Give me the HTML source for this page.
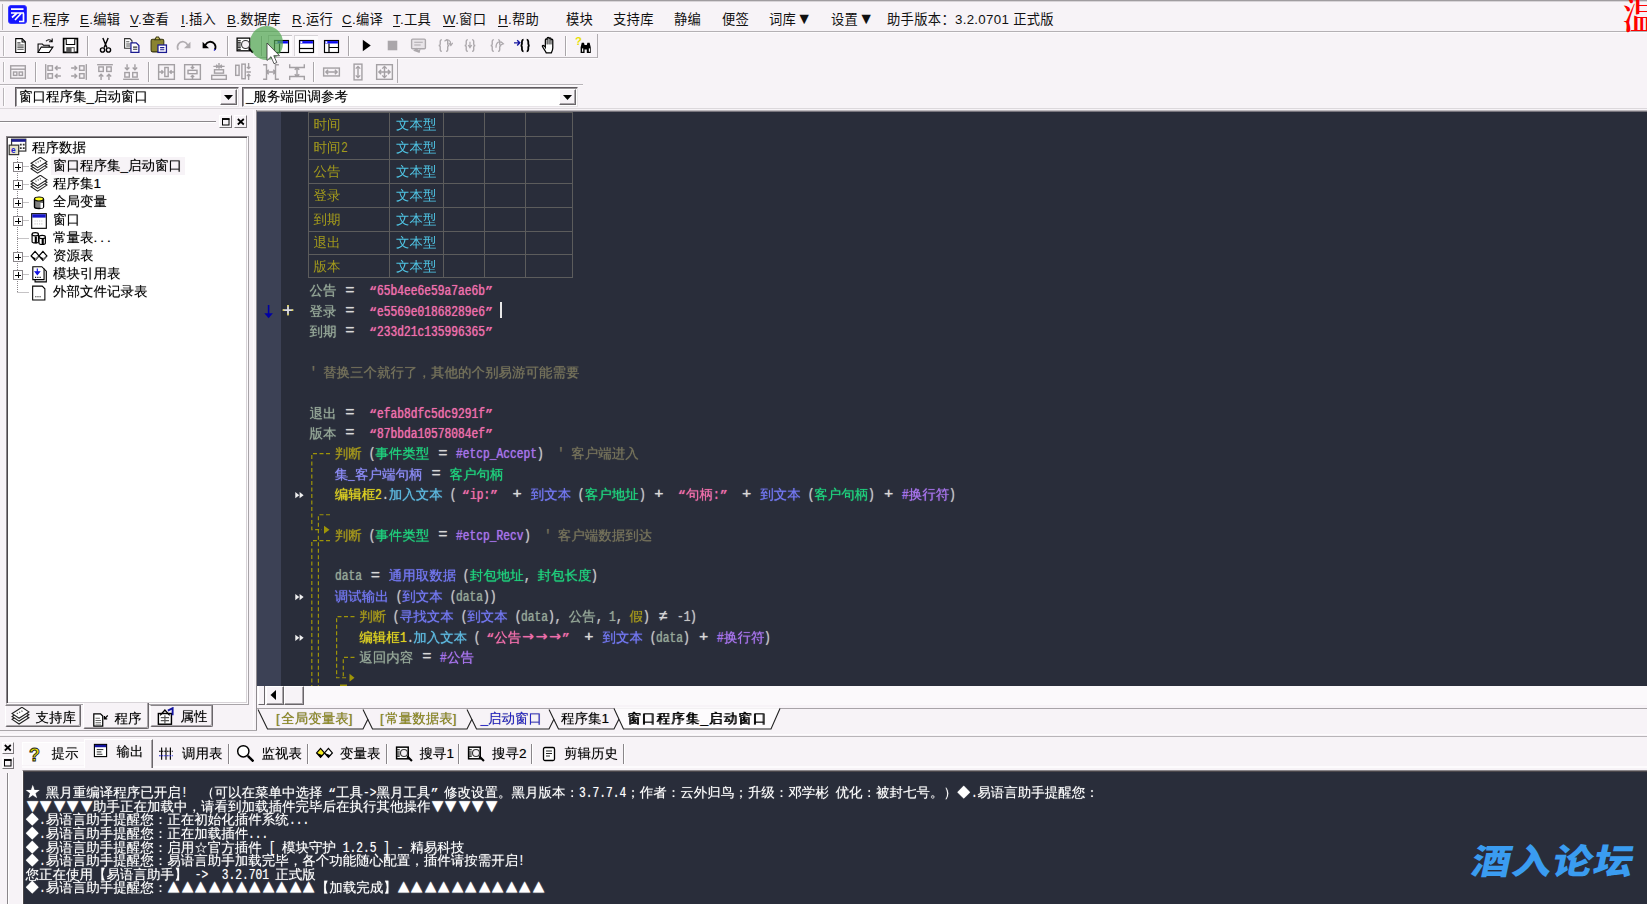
<!DOCTYPE html>
<html lang="zh-CN"><head><meta charset="utf-8"><title>易语言</title>
<style>
*{margin:0;padding:0;box-sizing:border-box}
html,body{width:1647px;height:904px;overflow:hidden;background:#f7f3f7}
body{position:relative;font-family:"Liberation Sans","WenQuanYi Zen Hei",sans-serif;font-size:13.5px;color:#000}
body div,body svg{position:absolute}
.u{white-space:pre;font-family:"Liberation Sans","WenQuanYi Zen Hei",sans-serif;font-size:13.5px;color:#000;text-shadow:0 0 .8px rgba(0,0,0,.45)}
.m{white-space:pre;font-family:"Liberation Sans","Noto Sans CJK SC",sans-serif;font-size:13.3px;letter-spacing:.3px;color:#111}
.m u{text-decoration:underline;text-underline-offset:2px}
.c{white-space:pre;font-family:"Liberation Mono","WenQuanYi Zen Hei",monospace;font-size:13.5px;color:#c8c8c8}
.c span{text-shadow:0 0 1px currentColor}
.c i,.o i{font-style:normal;font-family:"Liberation Mono",monospace;font-size:14.5px;display:inline-block;transform:scaleX(.7759);transform-origin:0 50%;position:relative;top:0;line-height:10px}
.c b{font-weight:normal;display:inline-block;width:13.5px;position:relative;line-height:10px}
.o{white-space:pre;font-family:"Liberation Mono","WenQuanYi Zen Hei",monospace;font-size:13.5px;color:#fff;text-shadow:0 0 1px rgba(255,255,255,.55)}
.o b{font-weight:normal;display:inline-block;width:13.5px;line-height:10px}
</style></head>
<body>
<div style="left:0px;top:0px;width:1647px;height:1px;background:#a09ca0"></div>
<div style="left:0px;top:1px;width:1647px;height:1px;background:#d8d4d8"></div>
<div style="left:0px;top:31.4px;width:1647px;height:1px;background:#b4b0b4"></div>
<div style="left:0px;top:32.4px;width:1647px;height:1px;background:#fdfbfd"></div>
<div style="left:2px;top:4px;width:1px;height:26px;background:#b8b4b8"></div>
<svg style="left:8px;top:5px" width="19" height="19" viewBox="0 0 19 19"><rect x="0.5" y="0.5" width="18" height="18" rx="2.5" fill="#1414ff" stroke="#3c3cff"/><path d="M3 4.2h12.5M3 8h13M4 12.5l5-4.5M7 15l6-6.5M11 16.5h4.5v-8" stroke="#fff" stroke-width="1.7" fill="none"/></svg>
<div class="m" style="left:32px;top:10.3px;height:20px;line-height:20px;"><u>F</u>.程序</div>
<div class="m" style="left:80px;top:10.3px;height:20px;line-height:20px;"><u>E</u>.编辑</div>
<div class="m" style="left:130px;top:10.3px;height:20px;line-height:20px;"><u>V</u>.查看</div>
<div class="m" style="left:181px;top:10.3px;height:20px;line-height:20px;"><u>I</u>.插入</div>
<div class="m" style="left:227px;top:10.3px;height:20px;line-height:20px;"><u>B</u>.数据库</div>
<div class="m" style="left:292px;top:10.3px;height:20px;line-height:20px;"><u>R</u>.运行</div>
<div class="m" style="left:342px;top:10.3px;height:20px;line-height:20px;"><u>C</u>.编译</div>
<div class="m" style="left:393px;top:10.3px;height:20px;line-height:20px;"><u>T</u>.工具</div>
<div class="m" style="left:443px;top:10.3px;height:20px;line-height:20px;"><u>W</u>.窗口</div>
<div class="m" style="left:498px;top:10.3px;height:20px;line-height:20px;"><u>H</u>.帮助</div>
<div class="m" style="left:566px;top:10.3px;height:20px;line-height:20px;">模块</div>
<div class="m" style="left:613px;top:10.3px;height:20px;line-height:20px;">支持库</div>
<div class="m" style="left:674px;top:10.3px;height:20px;line-height:20px;">静编</div>
<div class="m" style="left:722px;top:10.3px;height:20px;line-height:20px;">便签</div>
<div class="m" style="left:769px;top:10.3px;height:20px;line-height:20px;">词库<span style="font-size:16px;line-height:10px;letter-spacing:0">▼</span></div>
<div class="m" style="left:831px;top:10.3px;height:20px;line-height:20px;">设置<span style="font-size:16px;line-height:10px;letter-spacing:0">▼</span></div>
<div class="m" style="left:887px;top:10.3px;height:20px;line-height:20px;">助手版本：3.2.0701 正式版</div>
<div style="left:1622.700px;top:-5.500px;font-family:'Liberation Serif','Noto Serif CJK SC',serif;font-weight:600;font-size:37px;line-height:44px;color:#f00;white-space:pre">温</div>
<div style="left:0px;top:57.3px;width:598px;height:1px;background:#b8b4b8"></div>
<div style="left:0px;top:58.3px;width:598px;height:1px;background:#fdfbfd"></div>
<div style="left:597px;top:34px;width:1px;height:24px;background:#b0acb0"></div>
<div style="left:3px;top:36px;width:1px;height:20px;background:#b8b4b8"></div>
<div style="left:4px;top:36px;width:1px;height:20px;background:#fff"></div>
<svg style="left:12.0px;top:36.5px" width="17" height="17" viewBox="0 0 16 16" ><path d="M3.5 1.5h6l3 3v10h-9z" fill="#fff" stroke="#000"/><path d="M9.5 1.5v3.2h3" fill="none" stroke="#000"/><path d="M5 5.5h3M5 7.5h6M5 9.5h6M5 11.5h6" stroke="#444"/></svg>
<svg style="left:35.5px;top:36.5px" width="19" height="17" viewBox="0 0 17 16" ><path d="M1.5 14.5v-8h4l1 1.2h5.5v2" fill="none" stroke="#000"/><path d="M1.5 14.5l3-5h11l-3.5 5z" fill="#fff" stroke="#000"/><path d="M9 4c1.5-2 4-2 5.5 0M14.8 1.5v3h-3" fill="none" stroke="#000"/></svg>
<svg style="left:61.5px;top:36.5px" width="17" height="17" viewBox="0 0 16 16" ><path d="M1.5 1.5h13v13h-13z" fill="#fff" stroke="#000" stroke-width="1.6"/><path d="M4 2v5h8V2" fill="#fff" stroke="#000"/><rect x="4" y="9.5" width="8" height="5" fill="#555"/><rect x="9" y="10.5" width="2" height="3.5" fill="#fff"/></svg>
<div style="left:87px;top:36px;width:1px;height:20px;background:#aaa6aa"></div>
<div style="left:88px;top:36px;width:1px;height:20px;background:#fff"></div>
<svg style="left:97.0px;top:36.5px" width="17" height="17" viewBox="0 0 16 16" ><path d="M5.5 1l3.8 9M10.5 1L6.7 10" stroke="#000" stroke-width="1.3" fill="none"/><circle cx="5.2" cy="12.2" r="2" fill="none" stroke="#000" stroke-width="1.3"/><circle cx="10.8" cy="12.2" r="2" fill="none" stroke="#000" stroke-width="1.3"/></svg>
<svg style="left:122.5px;top:36.0px" width="18" height="18" viewBox="0 0 17 17" ><path d="M1.5 2.5h5l2 2v7h-7z" fill="#fff" stroke="#333"/><path d="M3 5.5h3M3 7.5h4M3 9.5h4" stroke="#555"/><path d="M7.5 6.5h5l2.5 2.5v6.5h-7.500z" fill="#fff" stroke="#1a1a90" stroke-width="1.2"/><path d="M9.500 10.500h4M9.500 12.500h4" stroke="#333"/></svg>
<svg style="left:148.5px;top:36.0px" width="19" height="18" viewBox="0 0 17 17" ><rect x="1.500" y="3" width="12" height="12" rx="1.5" fill="#8a8430" stroke="#3a3810"/><path d="M5 3.500l1.500-2.500h2l1.500 2.500z" fill="#c8c060" stroke="#3a3810"/><rect x="8" y="8.500" width="8" height="7" fill="#fff" stroke="#1a1a90" stroke-width="1.2"/><path d="M10 11h4M10 13h4" stroke="#1a1a90"/></svg>
<svg style="left:175.0px;top:36.5px" width="17" height="17" viewBox="0 0 16 16" ><path d="M3 12c-2-4 1-8 5-7.500 2 .3 3 1.500 4 3" fill="none" stroke="#b0acb0" stroke-width="1.600"/><path d="M14.500 4.500v6h-6z" fill="#b0acb0"/></svg>
<svg style="left:201.0px;top:36.5px" width="17" height="17" viewBox="0 0 16 16" ><path d="M13 12c2-4-1-8-5-7.500-2 .3-3 1.500-4 3" fill="none" stroke="#000" stroke-width="1.700"/><path d="M1.500 4.500v6h6z" fill="#000"/><path d="M12.300 12.800l1-1.500" stroke="#22c" stroke-width="1.200"/></svg>
<div style="left:227px;top:36px;width:1px;height:20px;background:#aaa6aa"></div>
<div style="left:228px;top:36px;width:1px;height:20px;background:#fff"></div>
<svg style="left:234.5px;top:36.0px" width="19" height="18" viewBox="0 0 17 17" ><rect x="1.500" y="2" width="12" height="12" fill="#fff" stroke="#000" stroke-width="1.200"/><path d="M2 4.500h3M2 6.500h3M2 8.500h3M2 10.500h3M2 12.500h3" stroke="#000"/><circle cx="9.500" cy="8" r="3.800" fill="#f4f0f4" stroke="#333"/><path d="M12.500 11.500l4 4" stroke="#000" stroke-width="2"/></svg>
<div style="left:261px;top:36px;width:1px;height:20px;background:#aaa6aa"></div>
<div style="left:262px;top:36px;width:1px;height:20px;background:#fff"></div>
<div style="left:268px;top:35px;width:24px;height:21px;background:#fdfbfd;border-left:1px solid #c8c4c8;border-top:1px solid #c8c4c8"></div>
<div style="left:294px;top:35px;width:24px;height:21px;background:#fdfbfd;border-left:1px solid #d8d4d8;border-top:1px solid #d8d4d8"></div>
<svg style="left:272.5px;top:38.5px" width="17" height="16" viewBox="0 0 16 16" ><rect x="1" y="1.500" width="14" height="12" fill="#fff" stroke="#000" stroke-width="1.150"/><rect x="1.600" y="2.100" width="12.800" height="2.400" fill="#0808f0"/><rect x="2" y="2.300" width="1.800" height="1.800" fill="#fff"/><path d="M6 4.500v9" stroke="#000" stroke-width="1.200"/><rect x="2" y="2.300" width="1.800" height="1.800" fill="#ddd"/></svg>
<svg style="left:298.0px;top:38.5px" width="17" height="16" viewBox="0 0 16 16" ><rect x="1" y="1.500" width="14" height="12" fill="#fff" stroke="#000" stroke-width="1.150"/><rect x="1.600" y="2.100" width="12.800" height="2.400" fill="#0808f0"/><rect x="2" y="2.300" width="1.800" height="1.800" fill="#fff"/><path d="M1 9.500h14" stroke="#000" stroke-width="1.200"/></svg>
<svg style="left:323.0px;top:38.5px" width="17" height="16" viewBox="0 0 16 16" ><rect x="1" y="1.500" width="14" height="12" fill="#fff" stroke="#000" stroke-width="1.150"/><rect x="1.600" y="2.100" width="12.800" height="2.400" fill="#0808f0"/><rect x="2" y="2.300" width="1.800" height="1.800" fill="#fff"/><path d="M5.500 4.500v9M5.500 8.500h9.500" stroke="#000" stroke-width="1.200"/></svg>
<div style="left:348px;top:36px;width:1px;height:20px;background:#aaa6aa"></div>
<div style="left:349px;top:36px;width:1px;height:20px;background:#fff"></div>
<svg style="left:358.0px;top:36.5px" width="17" height="17" viewBox="0 0 16 16" ><path d="M4.500 2.500v11l7.500-5.500z" fill="#000"/></svg>
<svg style="left:383.5px;top:36.5px" width="17" height="17" viewBox="0 0 16 16" ><rect x="3.500" y="3.500" width="9" height="9" fill="#aaa6aa"/></svg>
<svg style="left:409.5px;top:36.5px" width="17" height="17" viewBox="0 0 16 16" ><rect x="1.500" y="2" width="13" height="9" rx="1" fill="#e8e4e8" stroke="#aca8ac" stroke-width="1.300"/><path d="M4 5h8M4 7.500h6" stroke="#aca8ac"/><path d="M3 13l3-3 2 2.500 2-1.500-1 4z" fill="#aca8ac"/></svg>
<svg style="left:435.5px;top:36.5px" width="17" height="17" viewBox="0 0 16 16" ><path d="M5.500 2.500c-2 0-1.500 2.500-1.500 4 0 1-1 1.500-1.500 1.500 .5 0 1.500 .5 1.500 1.500 0 1.500-.5 4 1.500 4M9.500 2.500c2 0 1.500 2.500 1.500 4 0 1 1 1.500 1.500 1.500-.5 0-1.500 .5-1.500 1.500 0 1.500 .5 4-1.500 4" fill="none" stroke="#aca8ac" stroke-width="1.300"/><path d="M8 4c3-2.500 6-1 6 3M12 5.500l2 2.500 1.800-2.500" fill="none" stroke="#aca8ac" stroke-width="1.100"/></svg>
<svg style="left:461.5px;top:36.5px" width="17" height="17" viewBox="0 0 16 16" ><path d="M5.500 2.500c-2 0-1.500 2.500-1.500 4 0 1-1 1.500-1.500 1.500 .5 0 1.500 .5 1.500 1.500 0 1.500-.5 4 1.500 4M9.500 2.500c2 0 1.500 2.500 1.500 4 0 1 1 1.500 1.500 1.500-.5 0-1.500 .5-1.500 1.500 0 1.500 .5 4-1.500 4" fill="none" stroke="#aca8ac" stroke-width="1.300"/><path d="M7.500 4.500v5M5.800 7.500l1.700 2.500 1.700-2.500" fill="none" stroke="#aca8ac" stroke-width="1.100"/></svg>
<svg style="left:487.5px;top:36.5px" width="17" height="17" viewBox="0 0 16 16" ><path d="M5.500 2.500c-2 0-1.500 2.500-1.500 4 0 1-1 1.500-1.500 1.500 .5 0 1.500 .5 1.500 1.500 0 1.500-.5 4 1.500 4M9.500 2.500c2 0 1.500 2.500 1.500 4 0 1 1 1.500 1.500 1.500-.5 0-1.500 .5-1.500 1.500 0 1.500 .5 4-1.500 4" fill="none" stroke="#aca8ac" stroke-width="1.300"/><path d="M7.500 10c0-5 3-7 6.500-4M12.200 4.500l2.300 2-2.800 1" fill="none" stroke="#aca8ac" stroke-width="1.100"/></svg>
<svg style="left:513.5px;top:36.5px" width="18" height="17" viewBox="0 0 17 16" ><path d="M9 2.500c-1.800 0-1.500 2.500-1.500 4 0 1-.8 1.500-1.300 1.500 .5 0 1.300 .5 1.300 1.500 0 1.500-.3 4 1.500 4M12 2.500c1.800 0 1.500 2.500 1.500 4 0 1 .8 1.500 1.300 1.500-.5 0-1.300 .5-1.300 1.500 0 1.500 .3 4-1.500 4" fill="none" stroke="#000" stroke-width="1.700"/><path d="M0 5.500h5M3 3l2.500 2.500-2.500 2.500" fill="none" stroke="#1414a0" stroke-width="1.300"/></svg>
<svg style="left:539.5px;top:36.0px" width="17" height="18" viewBox="0 0 13 16" ><path d="M4.500 15c-1-2-3-4.500-3.500-6 .5-1 1.800-.6 2.700 1v-6.500c0-1.200 1.600-1.200 1.600 0v-1.300c0-1.300 1.700-1.300 1.700 0v.5c0-1.300 1.700-1.300 1.700 0v1c0-1.200 1.600-1.200 1.600 0v7c0 2-.6 3-1.300 4.300z" fill="#fff" stroke="#000" stroke-width="1.100"/><path d="M5.300 3.500v4M7 2.500v5M8.700 3v4.500" stroke="#000" stroke-width=".8"/></svg>
<div style="left:565px;top:36px;width:1px;height:20px;background:#aaa6aa"></div>
<div style="left:566px;top:36px;width:1px;height:20px;background:#fff"></div>
<svg style="left:575.0px;top:36.0px" width="18" height="18" viewBox="0 0 16 16" ><text x="0" y="8" font-family="Liberation Sans" font-weight="700" font-size="10" fill="#e8e000">?</text><path d="M5 10l1-4h2l.5 2h2l.5-2h2l1 4v5h-3.500v-3h-2v3h-3.500z" fill="#000"/><rect x="6.300" y="11" width="1" height="3" fill="#fff"/><rect x="12.300" y="11" width="1" height="3" fill="#fff"/></svg>
<div style="left:0px;top:83.6px;width:583px;height:1px;background:#b8b4b8"></div>
<div style="left:0px;top:84.6px;width:583px;height:1px;background:#fdfbfd"></div>
<div style="left:397px;top:59px;width:1px;height:24px;background:#b0acb0"></div>
<div style="left:3px;top:62px;width:1px;height:20px;background:#b8b4b8"></div>
<div style="left:4px;top:62px;width:1px;height:20px;background:#fff"></div>
<svg style="left:9.0px;top:63.0px" width="18" height="18" viewBox="0 0 16 16" ><g fill="none" stroke="#a4a0a4" stroke-width="1.250"><rect x="1.500" y="2.500" width="13" height="11"/><path d="M1.500 5.500h13"/><rect x="4" y="8" width="3" height="3"/><rect x="9" y="8" width="3" height="3"/></g></svg>
<div style="left:35px;top:62px;width:1px;height:20px;background:#aaa6aa"></div>
<div style="left:36px;top:62px;width:1px;height:20px;background:#fff"></div>
<svg style="left:43.5px;top:63.0px" width="18" height="18" viewBox="0 0 16 16" ><g fill="none" stroke="#a4a0a4" stroke-width="1.250"><path d="M1.500 1v14"/><rect x="3.500" y="2.500" width="4" height="4"/><rect x="3.500" y="9.500" width="4" height="4"/><path d="M15 4.500h-5M12 2.500l-2 2 2 2M15 11.500h-5M12 9.500l-2 2 2 2"/></g></svg>
<svg style="left:69.5px;top:63.0px" width="18" height="18" viewBox="0 0 16 16" ><g fill="none" stroke="#a4a0a4" stroke-width="1.250"><path d="M14.500 1v14"/><rect x="8.500" y="2.500" width="4" height="4"/><rect x="8.500" y="9.500" width="4" height="4"/><path d="M1 4.500h5M4 2.500l2 2-2 2M1 11.500h5M4 9.500l2 2-2 2"/></g></svg>
<svg style="left:95.5px;top:63.0px" width="18" height="18" viewBox="0 0 16 16" ><g fill="none" stroke="#a4a0a4" stroke-width="1.250"><path d="M1 1.500h14"/><rect x="2.500" y="3.500" width="4" height="4"/><rect x="9.500" y="3.500" width="4" height="4"/><path d="M4.500 15v-5M2.500 12l2-2 2 2M11.500 15v-5M9.500 12l2-2 2 2"/></g></svg>
<svg style="left:122.0px;top:63.0px" width="18" height="18" viewBox="0 0 16 16" ><g fill="none" stroke="#a4a0a4" stroke-width="1.250"><path d="M1 14.500h14"/><rect x="2.500" y="8.500" width="4" height="4"/><rect x="9.500" y="8.500" width="4" height="4"/><path d="M4.500 1v5M2.500 4l2 2 2-2M11.500 1v5M9.500 4l2 2 2-2"/></g></svg>
<div style="left:148px;top:62px;width:1px;height:20px;background:#aaa6aa"></div>
<div style="left:149px;top:62px;width:1px;height:20px;background:#fff"></div>
<svg style="left:156.5px;top:63.0px" width="19" height="18" viewBox="0 0 16 16" ><g fill="none" stroke="#a4a0a4" stroke-width="1.250"><rect x="1" y="1.500" width="14" height="13"/><rect x="6.500" y="4" width="3" height="8"/><path d="M1 8h4M3.500 6.500l1.500 1.500-1.500 1.500M15 8h-4M12.500 6.500l-1.500 1.500 1.500 1.500"/></g></svg>
<svg style="left:183.0px;top:63.0px" width="19" height="18" viewBox="0 0 16 16" ><g fill="none" stroke="#a4a0a4" stroke-width="1.250"><rect x="1" y="1.500" width="14" height="13"/><rect x="4" y="6.500" width="8" height="3"/><path d="M8 1.500v3.500M6.500 3.500l1.500 1.500 1.500-1.500M8 14.500v-3.500M6.500 12.500l1.500-1.500 1.500 1.500"/></g></svg>
<svg style="left:209.5px;top:63.0px" width="18" height="18" viewBox="0 0 16 16" ><g fill="none" stroke="#a4a0a4" stroke-width="1.250"><rect x="1.500" y="11" width="13" height="3.500"/><rect x="4" y="6" width="8" height="3"/><path d="M3 3h4M5.500 1.500l1.500 1.500-1.500 1.500M13 3h-4M10.500 1.500l-1.500 1.500 1.500 1.500M8 0v5"/></g></svg>
<svg style="left:234.0px;top:63.0px" width="18" height="18" viewBox="0 0 16 16" ><g fill="none" stroke="#a4a0a4" stroke-width="1.250"><rect x="1.500" y="2" width="3" height="9"/><rect x="7" y="1" width="3" height="13"/><path d="M13 0v5M11.500 3.500l1.500 1.500 1.500-1.500M13 15v-5M11.500 11.500l1.500-1.500 1.500 1.500M11 8h4"/></g></svg>
<svg style="left:261.5px;top:63.0px" width="18" height="18" viewBox="0 0 16 16" ><g fill="none" stroke="#a4a0a4" stroke-width="1.250"><path d="M1 1.500h3v13h-3M15 1.500h-3v13h3M4 8h8M6 6l-2 2 2 2M10 6l2 2-2 2"/></g></svg>
<svg style="left:287.5px;top:63.0px" width="18" height="18" viewBox="0 0 16 16" ><g fill="none" stroke="#a4a0a4" stroke-width="1.250"><path d="M1.500 1v3h13v-3M1.500 15v-3h13v3M8 4v8M6 6l2-2 2 2M6 10l2 2 2-2"/></g></svg>
<div style="left:313px;top:62px;width:1px;height:20px;background:#aaa6aa"></div>
<div style="left:314px;top:62px;width:1px;height:20px;background:#fff"></div>
<svg style="left:322.0px;top:63.0px" width="19" height="18" viewBox="0 0 16 16" ><g fill="none" stroke="#a4a0a4" stroke-width="1.250"><rect x="1" y="4.500" width="14" height="7"/><path d="M3 8h10M5 6l-2 2 2 2M11 6l2 2-2 2"/></g></svg>
<svg style="left:348.5px;top:63.0px" width="18" height="18" viewBox="0 0 16 16" ><g fill="none" stroke="#a4a0a4" stroke-width="1.250"><rect x="4.500" y="1" width="7" height="14"/><path d="M8 3v10M6 5l2-2 2 2M6 11l2 2 2-2"/></g></svg>
<svg style="left:374.5px;top:63.0px" width="19" height="18" viewBox="0 0 16 16" ><g fill="none" stroke="#a4a0a4" stroke-width="1.250"><rect x="1" y="1.500" width="14" height="13"/><path d="M3 8h10M5 6l-2 2 2 2M11 6l2 2-2 2M8 3v10M6 5l2-2 2 2M6 11l2 2 2-2"/></g></svg>
<div style="left:15px;top:86.5px;width:224px;height:20.5px;background:#fff;border:1px solid #5e5a5e;border-right-color:#e8e4e8;border-bottom-color:#e8e4e8;box-shadow:inset 1px 1px 0 #9a969a"></div>
<div style="left:220px;top:89px;width:17px;height:16px;background:#f7f3f7;border:1px solid #fff;border-right-color:#6a666a;border-bottom-color:#6a666a;box-shadow:inset -1px -1px 0 #aaa6aa"></div>
<svg style="left:224px;top:95px" width="9" height="5" viewBox="0 0 9 5"><path d="M0 0h9l-4.500 5z" fill="#000"/></svg>
<div class="u" style="left:19px;top:87.0px;height:20px;line-height:20px;">窗口程序集_启动窗口</div>
<div style="left:242px;top:86.5px;width:336px;height:20.5px;background:#fff;border:1px solid #5e5a5e;border-right-color:#e8e4e8;border-bottom-color:#e8e4e8;box-shadow:inset 1px 1px 0 #9a969a"></div>
<div style="left:559px;top:89px;width:17px;height:16px;background:#f7f3f7;border:1px solid #fff;border-right-color:#6a666a;border-bottom-color:#6a666a;box-shadow:inset -1px -1px 0 #aaa6aa"></div>
<svg style="left:563px;top:95px" width="9" height="5" viewBox="0 0 9 5"><path d="M0 0h9l-4.500 5z" fill="#000"/></svg>
<div class="u" style="left:246px;top:87.0px;height:20px;line-height:20px;">_服务端回调参考</div>
<div style="left:3px;top:88px;width:1px;height:18px;background:#b8b4b8"></div>
<div style="left:4px;top:88px;width:1px;height:18px;background:#fff"></div>
<div style="left:0px;top:108px;width:1647px;height:1px;background:#dcd8dc"></div>
<div style="left:0px;top:121px;width:216px;height:1px;background:#8a868a"></div>
<div style="left:0px;top:122px;width:216px;height:1px;background:#fff"></div>
<div style="left:219px;top:115px;width:13px;height:13px;background:#f7f3f7;border:1px solid #fff;border-right-color:#7a767a;border-bottom-color:#7a767a"><svg style="left:2px;top:2px" width="8" height="8" viewBox="0 0 8 8"><rect x=".5" y="1" width="6.500" height="6" fill="none" stroke="#000"/><path d="M0 1h7.500" stroke="#000" stroke-width="1.800"/></svg></div>
<div style="left:234px;top:115px;width:13px;height:13px;background:#f7f3f7;border:1px solid #fff;border-right-color:#7a767a;border-bottom-color:#7a767a"><svg style="left:2px;top:2px" width="8" height="8" viewBox="0 0 8 8"><path d="M.8 1l6 5.500M6.800 1l-6 5.500" stroke="#000" stroke-width="1.700"/></svg></div>
<div style="left:6px;top:136px;width:242px;height:568px;background:#fff;border:1px solid #8a868a;border-right-color:#fdfbfd;border-bottom-color:#fdfbfd;box-shadow:inset 1px 1px 0 #4a464a, inset -1px -1px 0 #d8d4d8"></div>
<div style="left:248px;top:136px;width:1px;height:568px;background:#a8a4a8"></div>
<div style="left:6px;top:704px;width:243px;height:1px;background:#a8a4a8"></div>
<svg style="left:0;top:136px" width="60" height="180" viewBox="0 136 60 180"><g stroke="#8a868a" stroke-dasharray="1 1" fill="none"><path d="M17.500 157v136M17.500 166.500h12M17.500 184.500h12M17.500 202.500h12M17.500 220.500h12M17.500 238.500h12M17.500 256.500h12M17.500 274.500h12M17.500 292.500h12"/></g></svg>
<div style="left:51px;top:157px;width:134px;height:18px;background:#f7f3f7"></div>
<div class="u" style="left:32px;top:137.5px;height:20px;line-height:20px;">程序数据</div>
<div class="u" style="left:53px;top:155.5px;height:20px;line-height:20px;">窗口程序集_启动窗口</div>
<svg style="left:13px;top:162px" width="10" height="10" viewBox="0 0 10 10" shape-rendering="crispEdges"><rect x=".5" y=".5" width="9" height="9" fill="#fff" stroke="#8a868a"/><path d="M2 5.500h6M5.500 2v6" stroke="#000" stroke-width="1"/></svg>
<div class="u" style="left:53px;top:173.5px;height:20px;line-height:20px;">程序集1</div>
<svg style="left:13px;top:180px" width="10" height="10" viewBox="0 0 10 10" shape-rendering="crispEdges"><rect x=".5" y=".5" width="9" height="9" fill="#fff" stroke="#8a868a"/><path d="M2 5.500h6M5.500 2v6" stroke="#000" stroke-width="1"/></svg>
<div class="u" style="left:53px;top:192.0px;height:20px;line-height:20px;">全局变量</div>
<svg style="left:13px;top:198px" width="10" height="10" viewBox="0 0 10 10" shape-rendering="crispEdges"><rect x=".5" y=".5" width="9" height="9" fill="#fff" stroke="#8a868a"/><path d="M2 5.500h6M5.500 2v6" stroke="#000" stroke-width="1"/></svg>
<div class="u" style="left:53px;top:210.0px;height:20px;line-height:20px;">窗口</div>
<svg style="left:13px;top:216px" width="10" height="10" viewBox="0 0 10 10" shape-rendering="crispEdges"><rect x=".5" y=".5" width="9" height="9" fill="#fff" stroke="#8a868a"/><path d="M2 5.500h6M5.500 2v6" stroke="#000" stroke-width="1"/></svg>
<div class="u" style="left:53px;top:228.0px;height:20px;line-height:20px;">常量表<span style="letter-spacing:3px">...</span></div>
<div class="u" style="left:53px;top:246.0px;height:20px;line-height:20px;">资源表</div>
<svg style="left:13px;top:252px" width="10" height="10" viewBox="0 0 10 10" shape-rendering="crispEdges"><rect x=".5" y=".5" width="9" height="9" fill="#fff" stroke="#8a868a"/><path d="M2 5.500h6M5.500 2v6" stroke="#000" stroke-width="1"/></svg>
<div class="u" style="left:53px;top:264.0px;height:20px;line-height:20px;">模块引用表</div>
<svg style="left:13px;top:270px" width="10" height="10" viewBox="0 0 10 10" shape-rendering="crispEdges"><rect x=".5" y=".5" width="9" height="9" fill="#fff" stroke="#8a868a"/><path d="M2 5.500h6M5.500 2v6" stroke="#000" stroke-width="1"/></svg>
<div class="u" style="left:53px;top:282.0px;height:20px;line-height:20px;">外部文件记录表</div>
<svg style="left:8.0px;top:137.5px" width="19" height="19" viewBox="0 0 16 16"><rect x="3" y="1" width="12" height="10" fill="#fff" stroke="#333"/><rect x="3" y="1" width="12" height="2.200" fill="#1a1a90"/><rect x="1" y="6" width="8" height="8" fill="#e8e4c8" stroke="#333"/><text x="2.500" y="13" font-size="7" font-family="Liberation Sans" font-weight="700" fill="#1a1ac8">e</text><path d="M10 5.500h1.500M12.500 5.500h1.500M10 8.500h1.500M12.500 8.500h1.500" stroke="#333" stroke-width="1.500"/></svg>
<svg style="left:29.5px;top:157.0px" width="18" height="18" viewBox="0 0 16.500 16"><g fill="#fff" stroke="#222" stroke-width="1"><path d="M1 10.500l6 4 8.500-5.500-6-4z"/><path d="M1 8l6 4 8.500-5.500-6-4z"/><path d="M1 5.500l6 4 8.500-5.500-6-4z"/></g><path d="M5 5l1 .6M7 4l1 .6M9 3l1 .6" stroke="#555"/></svg>
<svg style="left:29.5px;top:175.0px" width="18" height="18" viewBox="0 0 16.500 16"><g fill="#fff" stroke="#222" stroke-width="1"><path d="M1 10.500l6 4 8.500-5.500-6-4z"/><path d="M1 8l6 4 8.500-5.500-6-4z"/><path d="M1 5.500l6 4 8.500-5.500-6-4z"/></g><path d="M5 5l1 .6M7 4l1 .6M9 3l1 .6" stroke="#555"/></svg>
<svg style="left:30.5px;top:194.5px" width="16" height="16" viewBox="0 0 16 16"><path d="M3.500 4v8c0 2 9 2 9 0v-8" fill="#808080" stroke="#000" stroke-width="1.400"/><path d="M9.500 8v5.300c1.500 0 2.500-.5 2.500-1.300v-4z" fill="#fff"/><ellipse cx="8" cy="4" rx="4.500" ry="2" fill="#ffff20" stroke="#000" stroke-width="1.200"/></svg>
<svg style="left:29.5px;top:211.5px" width="18" height="18" viewBox="0 0 16 16"><rect x="1.500" y="1.500" width="13" height="13" fill="#fff" stroke="#000"/><rect x="2" y="2" width="12" height="3" fill="#1414c8"/><path d="M4 8h8M4 10.500h8" stroke="#ccc" stroke-dasharray="1 1"/></svg>
<svg style="left:29.5px;top:230.0px" width="18" height="17" viewBox="0 0 16 16"><g fill="#fff" stroke="#000" stroke-width="1.100"><path d="M1.500 4v7c0 1.500 6 1.500 6 0v-7"/><ellipse cx="4.500" cy="4" rx="3" ry="1.500"/><path d="M8 6.500v6c0 1.500 6 1.500 6 0v-6"/><ellipse cx="11" cy="6.500" rx="3" ry="1.500"/></g><path d="M5 6v6.500M11.500 8.500v5.500" stroke="#000" stroke-width="2"/></svg>
<svg style="left:28.5px;top:247.5px" width="20" height="18" viewBox="0 0 16 16"><g fill="#fff" stroke="#000" stroke-width="1.100"><path d="M1 7l3.500-4 3.500 4-3.500 4z"/><path d="M8 7l3.500-4 3.500 4-3.500 4z"/></g><path d="M1 7l3.500 4v-2.200zM8 7l3.500 4v-2.200z" fill="#000"/><path d="M4.500 8.800v2.200l3.500-4zM11.500 8.800v2.200l3.500-4z" fill="#888"/></svg>
<svg style="left:29.5px;top:265.0px" width="18" height="18" viewBox="0 0 16 16"><path d="M4.500 3.500h8l2 2v9.500h-10z" fill="#fff" stroke="#000"/><path d="M2.500 1.500h8l2 2v9.500h-10z" fill="#fff" stroke="#000"/><path d="M6.500 3v5M4.500 6l2 2.500 2-2.500z" stroke="#1414e0" fill="#1414e0"/><path d="M4.500 11h5" stroke="#000" stroke-dasharray="1 1"/></svg>
<svg style="left:30.0px;top:283.5px" width="17" height="18" viewBox="0 0 16 16"><path d="M2.500 1.500h9l2.500 2.500v10.500h-11.500z" fill="#fff" stroke="#000"/><path d="M5 11.500h6" stroke="#000" stroke-dasharray="1 1"/></svg>
<div style="left:5px;top:705px;width:76px;height:22px;background:#f7f3f7;border:1px solid #fff;border-top:1px solid #8a868a;border-right-color:#6a666a;border-bottom-color:#6a666a;box-shadow:inset -1px -1px 0 #aaa6aa;border-radius:0 0 2px 2px"></div>
<div style="left:150px;top:705px;width:63px;height:22px;background:#f7f3f7;border:1px solid #fff;border-top:1px solid #8a868a;border-right-color:#6a666a;border-bottom-color:#6a666a;box-shadow:inset -1px -1px 0 #aaa6aa;border-radius:0 0 2px 2px"></div>
<div style="left:83px;top:703px;width:66px;height:26px;background:#f7f3f7;border:1px solid #fff;border-top:none;border-right-color:#6a666a;border-bottom-color:#6a666a;box-shadow:inset -1px -1px 0 #aaa6aa;border-radius:0 0 2px 2px"></div>
<svg style="left:10.5px;top:707.0px" width="19" height="19" viewBox="0 0 16.500 16"><g fill="#fff" stroke="#222" stroke-width="1"><path d="M1 10.500l6 4 8.500-5.500-6-4z"/><path d="M1 8l6 4 8.500-5.500-6-4z"/><path d="M1 5.500l6 4 8.500-5.500-6-4z"/></g><path d="M5 5l1 .6M7 4l1 .6M9 3l1 .6" stroke="#555"/></svg>
<div class="u" style="left:35.5px;top:707.5px;height:20px;line-height:20px;">支持库</div>
<svg style="left:90.5px;top:711.0px" width="19" height="18" viewBox="0 0 17 16"><path d="M2.500 2.500h6l2 2v9h-8z" fill="#fff" stroke="#000" stroke-width="1.100"/><path d="M4 6.500h4M4 8.500h5M4 10.500h5M4 12.500h5" stroke="#666" stroke-width=".9"/><path d="M15 4l-3 3M12 4.500v2.500h2.500" fill="none" stroke="#000" stroke-width="1.100"/></svg>
<div class="u" style="left:114.5px;top:709.0px;height:20px;line-height:20px;">程序</div>
<svg style="left:155.5px;top:707.0px" width="19" height="19" viewBox="0 0 16 16"><rect x="2" y="5.500" width="11" height="9" fill="#fff" stroke="#000" stroke-width="1.200"/><path d="M4 9h7M4 11.500h7M7.500 7v7" stroke="#555"/><path d="M3.500 7l4-4.500 4 4.500" fill="none" stroke="#000" stroke-width="1.100"/><path d="M10 3l4-2v6" fill="none" stroke="#1414a0" stroke-width="1.600"/></svg>
<div class="u" style="left:180.5px;top:707.0px;height:20px;line-height:20px;">属性</div>
<div style="left:253px;top:110px;width:1px;height:620px;background:#fdfbfd"></div>
<div style="left:255.8px;top:110px;width:1.2px;height:621px;background:#8e8a8e"></div>
<div style="left:0px;top:729.7px;width:257px;height:1px;background:#aaa6aa"></div>
<div style="left:257px;top:111.5px;width:1390px;height:574.5px;background:#292d3a"></div>
<div style="left:257px;top:111.5px;width:23.5px;height:574.5px;background:#3c4155"></div>
<div style="left:257px;top:109.7px;width:1390px;height:1px;background:#bcb8bc"></div>
<div style="left:257px;top:110.7px;width:1390px;height:1px;background:#77747c"></div>
<div style="left:307.5px;top:112.4px;width:1px;height:165.99999999999997px;background:#5c5c5c"></div>
<div style="left:389.0px;top:112.4px;width:1px;height:165.99999999999997px;background:#5c5c5c"></div>
<div style="left:443.0px;top:112.4px;width:1px;height:165.99999999999997px;background:#5c5c5c"></div>
<div style="left:484.0px;top:112.4px;width:1px;height:165.99999999999997px;background:#5c5c5c"></div>
<div style="left:525.0px;top:112.4px;width:1px;height:165.99999999999997px;background:#5c5c5c"></div>
<div style="left:572.0px;top:112.4px;width:1px;height:165.99999999999997px;background:#5c5c5c"></div>
<div style="left:307.5px;top:111.9px;width:265.5px;height:1px;background:#5c5c5c"></div>
<div style="left:307.5px;top:135.5px;width:265.5px;height:1px;background:#5c5c5c"></div>
<div style="left:307.5px;top:159.2px;width:265.5px;height:1px;background:#5c5c5c"></div>
<div style="left:307.5px;top:182.9px;width:265.5px;height:1px;background:#5c5c5c"></div>
<div style="left:307.5px;top:206.6px;width:265.5px;height:1px;background:#5c5c5c"></div>
<div style="left:307.5px;top:230.6px;width:265.5px;height:1px;background:#5c5c5c"></div>
<div style="left:307.5px;top:254.3px;width:265.5px;height:1px;background:#5c5c5c"></div>
<div style="left:307.5px;top:276.9px;width:265.5px;height:1px;background:#5c5c5c"></div>
<div class="c" style="left:313.5px;top:115.7px;height:20px;line-height:20px;color:#a39a1c">时间</div>
<div class="c" style="left:396px;top:115.7px;height:20px;line-height:20px;color:#4fc4e4">文本型</div>
<div class="c" style="left:313.5px;top:139.35px;height:20px;line-height:20px;color:#a39a1c">时间<i style="margin-right:-1.95px">2</i></div>
<div class="c" style="left:396px;top:139.35px;height:20px;line-height:20px;color:#4fc4e4">文本型</div>
<div class="c" style="left:313.5px;top:163.05px;height:20px;line-height:20px;color:#a39a1c">公告</div>
<div class="c" style="left:396px;top:163.05px;height:20px;line-height:20px;color:#4fc4e4">文本型</div>
<div class="c" style="left:313.5px;top:186.75px;height:20px;line-height:20px;color:#a39a1c">登录</div>
<div class="c" style="left:396px;top:186.75px;height:20px;line-height:20px;color:#4fc4e4">文本型</div>
<div class="c" style="left:313.5px;top:210.6px;height:20px;line-height:20px;color:#a39a1c">到期</div>
<div class="c" style="left:396px;top:210.6px;height:20px;line-height:20px;color:#4fc4e4">文本型</div>
<div class="c" style="left:313.5px;top:234.45px;height:20px;line-height:20px;color:#a39a1c">退出</div>
<div class="c" style="left:396px;top:234.45px;height:20px;line-height:20px;color:#4fc4e4">文本型</div>
<div class="c" style="left:313.5px;top:257.6px;height:20px;line-height:20px;color:#a39a1c">版本</div>
<div class="c" style="left:396px;top:257.6px;height:20px;line-height:20px;color:#4fc4e4">文本型</div>
<div class="c" style="left:309.5px;top:282.3px;height:20px;line-height:20px;"><span style="color:#93a596">公告</span><span style="color:#d8d8d8"><i style="margin-right:-1.95px"> </i><b style="text-align:center;top:-.600px;font-size:15.500px">=</b><i style="margin-right:-1.95px"> </i></span><span style="color:#ee6eaa"><b style="text-align:right">“</b></span><span style="color:#ee6eaa"><i style="margin-right:-31.20px">65b4ee6e59a7ae6b</i></span><span style="color:#ee6eaa"><b style="text-align:left">”</b></span></div>
<div class="c" style="left:309.5px;top:302.67px;height:20px;line-height:20px;"><span style="color:#93a596">登录</span><span style="color:#d8d8d8"><i style="margin-right:-1.95px"> </i><b style="text-align:center;top:-.600px;font-size:15.500px">=</b><i style="margin-right:-1.95px"> </i></span><span style="color:#ee6eaa"><b style="text-align:right">“</b></span><span style="color:#ee6eaa"><i style="margin-right:-31.20px">e5569e01868289e6</i></span><span style="color:#ee6eaa"><b style="text-align:left">”</b></span></div>
<div class="c" style="left:309.5px;top:323.04px;height:20px;line-height:20px;"><span style="color:#93a596">到期</span><span style="color:#d8d8d8"><i style="margin-right:-1.95px"> </i><b style="text-align:center;top:-.600px;font-size:15.500px">=</b><i style="margin-right:-1.95px"> </i></span><span style="color:#ee6eaa"><b style="text-align:right">“</b></span><span style="color:#ee6eaa"><i style="margin-right:-31.20px">233d21c135996365</i></span><span style="color:#ee6eaa"><b style="text-align:left">”</b></span></div>
<div class="c" style="left:309.5px;top:363.78000000000003px;height:20px;line-height:20px;"><span style="color:#74715a"><i style="margin-right:-3.90px">' </i>替换三个就行了<b style="text-align:left">，</b>其他的个别易游可能需要</span></div>
<div class="c" style="left:309.5px;top:404.52px;height:20px;line-height:20px;"><span style="color:#93a596">退出</span><span style="color:#d8d8d8"><i style="margin-right:-1.95px"> </i><b style="text-align:center;top:-.600px;font-size:15.500px">=</b><i style="margin-right:-1.95px"> </i></span><span style="color:#ee6eaa"><b style="text-align:right">“</b></span><span style="color:#ee6eaa"><i style="margin-right:-31.20px">efab8dfc5dc9291f</i></span><span style="color:#ee6eaa"><b style="text-align:left">”</b></span></div>
<div class="c" style="left:309.5px;top:424.89px;height:20px;line-height:20px;"><span style="color:#93a596">版本</span><span style="color:#d8d8d8"><i style="margin-right:-1.95px"> </i><b style="text-align:center;top:-.600px;font-size:15.500px">=</b><i style="margin-right:-1.95px"> </i></span><span style="color:#ee6eaa"><b style="text-align:right">“</b></span><span style="color:#ee6eaa"><i style="margin-right:-31.20px">87bbda10578084ef</i></span><span style="color:#ee6eaa"><b style="text-align:left">”</b></span></div>
<div class="c" style="left:334.8px;top:445.26px;height:20px;line-height:20px;"><span style="color:#a3961c">判断</span><span style="color:#c4c4c4"><i style="margin-right:-3.90px"> (</i></span><span style="color:#1fcf7c">事件类型</span><span style="color:#d8d8d8"><i style="margin-right:-1.95px"> </i><b style="text-align:center;top:-.600px;font-size:15.500px">=</b><i style="margin-right:-1.95px"> </i></span><span style="color:#a673ea"><i style="margin-right:-23.40px">#etcp_Accept</i></span><span style="color:#c4c4c4"><i style="margin-right:-1.95px">)</i></span><span style="color:#74715a"><i style="margin-right:-7.80px">  ' </i>客户端进入</span></div>
<div class="c" style="left:334.8px;top:465.63px;height:20px;line-height:20px;"><span style="color:#8a8af2">集<i style="margin-right:-1.95px">_</i>客户端句柄</span><span style="color:#d8d8d8"><i style="margin-right:-1.95px"> </i><b style="text-align:center;top:-.600px;font-size:15.500px">=</b><i style="margin-right:-1.95px"> </i></span><span style="color:#1fcf7c">客户句柄</span></div>
<div class="c" style="left:334.8px;top:486.0px;height:20px;line-height:20px;"><span style="color:#ddd022">编辑框<i style="margin-right:-1.95px">2</i></span><span style="color:#c4c4c4"><i style="margin-right:-1.95px">.</i></span><span style="color:#5cb6dc">加入文本</span><span style="color:#c4c4c4"><i style="margin-right:-3.90px"> (</i></span><span style="color:#ee6eaa"><b style="text-align:right">“</b></span><span style="color:#ee6eaa"><i style="margin-right:-5.85px">ip:</i></span><span style="color:#ee6eaa"><b style="text-align:left">”</b></span><span style="color:#d8d8d8"><i style="margin-right:-1.95px"> </i><b style="text-align:center;top:-.600px;font-size:15.500px">+</b><i style="margin-right:-1.95px"> </i></span><span style="color:#7176ee">到文本</span><span style="color:#c4c4c4"><i style="margin-right:-3.90px"> (</i></span><span style="color:#1fcf7c">客户地址</span><span style="color:#c4c4c4"><i style="margin-right:-1.95px">)</i></span><span style="color:#d8d8d8"><i style="margin-right:-1.95px"> </i><b style="text-align:center;top:-.600px;font-size:15.500px">+</b><i style="margin-right:-1.95px"> </i></span><span style="color:#ee6eaa"><b style="text-align:right">“</b></span><span style="color:#ee6eaa">句柄<i style="margin-right:-1.95px">:</i></span><span style="color:#ee6eaa"><b style="text-align:left">”</b></span><span style="color:#d8d8d8"><i style="margin-right:-1.95px"> </i><b style="text-align:center;top:-.600px;font-size:15.500px">+</b><i style="margin-right:-1.95px"> </i></span><span style="color:#7176ee">到文本</span><span style="color:#c4c4c4"><i style="margin-right:-3.90px"> (</i></span><span style="color:#1fcf7c">客户句柄</span><span style="color:#c4c4c4"><i style="margin-right:-1.95px">)</i></span><span style="color:#d8d8d8"><i style="margin-right:-1.95px"> </i><b style="text-align:center;top:-.600px;font-size:15.500px">+</b><i style="margin-right:-1.95px"> </i></span><span style="color:#a673ea"><i style="margin-right:-1.95px">#</i>换行符</span><span style="color:#c4c4c4"><i style="margin-right:-1.95px">)</i></span></div>
<div class="c" style="left:334.8px;top:526.74px;height:20px;line-height:20px;"><span style="color:#a3961c">判断</span><span style="color:#c4c4c4"><i style="margin-right:-3.90px"> (</i></span><span style="color:#1fcf7c">事件类型</span><span style="color:#d8d8d8"><i style="margin-right:-1.95px"> </i><b style="text-align:center;top:-.600px;font-size:15.500px">=</b><i style="margin-right:-1.95px"> </i></span><span style="color:#a673ea"><i style="margin-right:-19.50px">#etcp_Recv</i></span><span style="color:#c4c4c4"><i style="margin-right:-1.95px">)</i></span><span style="color:#74715a"><i style="margin-right:-7.80px">  ' </i>客户端数据到达</span></div>
<div class="c" style="left:334.8px;top:567.48px;height:20px;line-height:20px;"><span style="color:#93a596"><i style="margin-right:-7.80px">data</i></span><span style="color:#d8d8d8"><i style="margin-right:-1.95px"> </i><b style="text-align:center;top:-.600px;font-size:15.500px">=</b><i style="margin-right:-1.95px"> </i></span><span style="color:#7176ee">通用取数据</span><span style="color:#c4c4c4"><i style="margin-right:-3.90px"> (</i></span><span style="color:#1fcf7c">封包地址</span><span style="color:#c4c4c4"><i style="margin-right:-3.90px">, </i></span><span style="color:#1fcf7c">封包长度</span><span style="color:#c4c4c4"><i style="margin-right:-1.95px">)</i></span></div>
<div class="c" style="left:334.8px;top:587.85px;height:20px;line-height:20px;"><span style="color:#7176ee">调试输出</span><span style="color:#c4c4c4"><i style="margin-right:-3.90px"> (</i></span><span style="color:#7176ee">到文本</span><span style="color:#c4c4c4"><i style="margin-right:-3.90px"> (</i></span><span style="color:#93a596"><i style="margin-right:-7.80px">data</i></span><span style="color:#c4c4c4"><i style="margin-right:-3.90px">))</i></span></div>
<div class="c" style="left:359.3px;top:608.22px;height:20px;line-height:20px;"><span style="color:#a3961c">判断</span><span style="color:#c4c4c4"><i style="margin-right:-3.90px"> (</i></span><span style="color:#7176ee">寻找文本</span><span style="color:#c4c4c4"><i style="margin-right:-3.90px"> (</i></span><span style="color:#7176ee">到文本</span><span style="color:#c4c4c4"><i style="margin-right:-3.90px"> (</i></span><span style="color:#93a596"><i style="margin-right:-7.80px">data</i></span><span style="color:#c4c4c4"><i style="margin-right:-5.85px">), </i></span><span style="color:#93a596">公告</span><span style="color:#c4c4c4"><i style="margin-right:-3.90px">, </i></span><span style="color:#93a596"><i style="margin-right:-1.95px">1</i></span><span style="color:#c4c4c4"><i style="margin-right:-3.90px">, </i></span><span style="color:#a3961c">假</span><span style="color:#c4c4c4"><i style="margin-right:-1.95px">)</i></span><span style="color:#d8d8d8"><i style="margin-right:-1.95px"> </i><b style="text-align:center;top:-.600px;font-size:15.500px">≠</b><i style="margin-right:-1.95px"> </i></span><span style="color:#c4c4c4"><i style="margin-right:-3.90px">-1</i></span><span style="color:#c4c4c4"><i style="margin-right:-1.95px">)</i></span></div>
<div class="c" style="left:359.3px;top:628.59px;height:20px;line-height:20px;"><span style="color:#ddd022">编辑框<i style="margin-right:-1.95px">1</i></span><span style="color:#c4c4c4"><i style="margin-right:-1.95px">.</i></span><span style="color:#5cb6dc">加入文本</span><span style="color:#c4c4c4"><i style="margin-right:-3.90px"> (</i></span><span style="color:#ee6eaa"><b style="text-align:right">“</b></span><span style="color:#ee6eaa">公告<b style="text-align:center;font-family:DejaVu Sans,sans-serif;font-size:14px;top:-1px">→</b><b style="text-align:center;font-family:DejaVu Sans,sans-serif;font-size:14px;top:-1px">→</b><b style="text-align:center;font-family:DejaVu Sans,sans-serif;font-size:14px;top:-1px">→</b></span><span style="color:#ee6eaa"><b style="text-align:left">”</b></span><span style="color:#d8d8d8"><i style="margin-right:-1.95px"> </i><b style="text-align:center;top:-.600px;font-size:15.500px">+</b><i style="margin-right:-1.95px"> </i></span><span style="color:#7176ee">到文本</span><span style="color:#c4c4c4"><i style="margin-right:-3.90px"> (</i></span><span style="color:#93a596"><i style="margin-right:-7.80px">data</i></span><span style="color:#c4c4c4"><i style="margin-right:-1.95px">)</i></span><span style="color:#d8d8d8"><i style="margin-right:-1.95px"> </i><b style="text-align:center;top:-.600px;font-size:15.500px">+</b><i style="margin-right:-1.95px"> </i></span><span style="color:#a673ea"><i style="margin-right:-1.95px">#</i>换行符</span><span style="color:#c4c4c4"><i style="margin-right:-1.95px">)</i></span></div>
<div class="c" style="left:359.3px;top:648.96px;height:20px;line-height:20px;"><span style="color:#93a596">返回内容</span><span style="color:#d8d8d8"><i style="margin-right:-1.95px"> </i><b style="text-align:center;top:-.600px;font-size:15.500px">=</b><i style="margin-right:-1.95px"> </i></span><span style="color:#a673ea"><i style="margin-right:-1.95px">#</i>公告</span></div>
<div style="left:500px;top:302px;width:1.5px;height:16px;background:#e8e8e8"></div>
<svg style="left:257px;top:110px" width="400" height="576" viewBox="257 110 400 576"><g fill="none" stroke="#9e9408" stroke-width="1.200" stroke-dasharray="4 2.500"><path d="M330 453.65999999999997H311.800V529.64H322"/><path d="M330 514.77H318.400V686"/><path d="M330 540.64H311.800V686"/><path d="M354.500 616.62H336.600V677.73H347"/><path d="M354.500 657.36H343.300V677.73"/></g><g fill="#9e9408"><path d="M324 525.64v8l5.500-4z"/><path d="M349.500 673.73v8l5-4z"/><rect x="340" y="684.500" width="7" height="1.500"/></g><g fill="#f0f0f0"><path d="M295.300 492.09999999999997v6.200l4-3.100zM299.600 492.09999999999997v6.200l4-3.100z"/><path d="M295.300 593.9499999999999v6.200l4-3.100zM299.600 593.9499999999999v6.200l4-3.100z"/><path d="M295.300 634.6899999999999v6.200l4-3.100zM299.600 634.6899999999999v6.200l4-3.100z"/></g><path d="M268.600 305v9" stroke="#0000a4" stroke-width="1.600" fill="none"/><path d="M264.300 313.200h8.600l-4.300 5z" fill="#0000a4"/><path d="M282.800 310.200h10.400M288 305.100v10.200" stroke="#dcdce4" stroke-width="1.800" fill="none"/><path d="M282.800 310.200h1.500M291.700 310.200h1.500M288 305.100v1.500M288 313.800v1.500" stroke="#d8cc50" stroke-width="1.800"/></svg>
<div style="left:257px;top:686px;width:1390px;height:19px;background:#fbf9fb"></div>
<div style="left:257.5px;top:686px;width:7.5px;height:19px;background:#f7f3f7;border-right:1px solid #6a666a;border-bottom:1px solid #6a666a;border-left:1px solid #fff"></div>
<div style="left:265.5px;top:686px;width:18.5px;height:19px;background:#f7f3f7;border:1px solid #fff;border-right-color:#6a666a;border-bottom-color:#6a666a;box-shadow:inset -1px -1px 0 #aaa6aa"></div>
<svg style="left:270px;top:690px" width="6" height="10" viewBox="0 0 6 10"><path d="M6 0v10l-5.500-5z" fill="#000"/></svg>
<div style="left:284px;top:686px;width:20px;height:19px;background:#f7f3f7;border:1px solid #fff;border-right-color:#6a666a;border-bottom-color:#6a666a;box-shadow:inset -1px -1px 0 #aaa6aa"></div>
<div style="left:257px;top:705px;width:1390px;height:3px;background:#f7f3f7"></div>
<div style="left:257px;top:707.5px;width:1390px;height:1px;background:#a8a4a8"></div>
<svg style="left:250px;top:706px" width="600" height="28" viewBox="250 706 600 28"><g fill="none" stroke="#222" stroke-width="1.100"><path d="M258 709.500l9.500 19.500H363l5-10"/><path d="M363 709.500l9.500 19.500H467l5-10"/><path d="M467 709.500l9.500 19.500H549l5-10"/><path d="M549 709.500l9.500 19.500H614l5-10"/><path d="M614 708.500l9.500 20.500H771L780 708.500" fill="#fdfbfd"/><path d="M615 708H779" stroke="#fdfbfd" stroke-width="1.500"/></g></svg>
<div class="u" style="left:274.6px;top:709.2px;height:20px;line-height:20px;color:#8e8a1a;"><span style="display:inline-block;width:6.750px;text-align:center">[</span>全局变量表<span style="display:inline-block;width:6.750px">]</span></div>
<div class="u" style="left:378.4px;top:709.2px;height:20px;line-height:20px;color:#8e8a1a;"><span style="display:inline-block;width:6.750px;text-align:center">[</span>常量数据表<span style="display:inline-block;width:6.750px">]</span></div>
<div class="u" style="left:480.4px;top:709.2px;height:20px;line-height:20px;color:#2222c8;">_启动窗口</div>
<div class="u" style="left:561px;top:709.2px;height:20px;line-height:20px;color:#000;">程序集1</div>
<div class="u" style="left:627px;top:709.2px;height:20px;line-height:20px;color:#000;letter-spacing:1.100px;text-shadow:1px 0 0 #000;">窗口程序集_启动窗口</div>
<div style="left:0px;top:733.5px;width:1647px;height:1.5px;background:#fdfbfd"></div>
<div style="left:0px;top:735.8px;width:1647px;height:1px;background:#b8b4b8"></div>
<div style="left:2px;top:742px;width:12px;height:12px;background:#f7f3f7;border:1px solid #fff;border-right-color:#7a767a;border-bottom-color:#7a767a"><svg style="left:1px;top:1px" width="8" height="8" viewBox="0 0 8 8"><path d="M.8 1l6 5.500M6.800 1l-6 5.500" stroke="#000" stroke-width="1.700"/></svg></div>
<div style="left:2px;top:757px;width:12px;height:12px;background:#f7f3f7;border:1px solid #fff;border-right-color:#7a767a;border-bottom-color:#7a767a"><svg style="left:1px;top:1px" width="8" height="8" viewBox="0 0 8 8"><rect x=".5" y="1" width="6.500" height="6" fill="none" stroke="#000"/><path d="M0 1h7.500" stroke="#000" stroke-width="1.800"/></svg></div>
<div style="left:7px;top:773px;width:1px;height:131px;background:#8a868a"></div>
<div style="left:8px;top:773px;width:1px;height:131px;background:#fff"></div>
<div style="left:22px;top:765.5px;width:1625px;height:2.5px;background:#fdfbfd"></div>
<div style="left:22px;top:742px;width:62px;height:23px;background:#fbf9fb;border-left:1px solid #fff;border-top:1px solid #fff"></div>
<div style="left:84px;top:739px;width:69px;height:29px;background:#f7f3f7;border:1px solid #fff;border-bottom:none;border-right:1px solid #6a666a;box-shadow:inset -1px 0 0 #aaa6aa"></div>
<div style="left:227.5px;top:744px;width:1px;height:20px;background:#8a868a"></div>
<div style="left:228.5px;top:744px;width:1px;height:20px;background:#fff"></div>
<div style="left:307px;top:744px;width:1px;height:20px;background:#8a868a"></div>
<div style="left:308px;top:744px;width:1px;height:20px;background:#fff"></div>
<div style="left:385.5px;top:744px;width:1px;height:20px;background:#8a868a"></div>
<div style="left:386.5px;top:744px;width:1px;height:20px;background:#fff"></div>
<div style="left:457.5px;top:744px;width:1px;height:20px;background:#8a868a"></div>
<div style="left:458.5px;top:744px;width:1px;height:20px;background:#fff"></div>
<div style="left:530.5px;top:744px;width:1px;height:20px;background:#8a868a"></div>
<div style="left:531.5px;top:744px;width:1px;height:20px;background:#fff"></div>
<div style="left:622.5px;top:744px;width:1px;height:20px;background:#8a868a"></div>
<div style="left:623.5px;top:744px;width:1px;height:20px;background:#fff"></div>
<svg style="left:27.0px;top:744.5px" width="16" height="18" viewBox="0 0 16 16"><text x="2" y="14.500" font-family="Liberation Sans" font-weight="700" font-size="18" fill="#f0e800" stroke="#222" stroke-width=".9">?</text></svg>
<div class="u" style="left:51.5px;top:743.8px;height:20px;line-height:20px;">提示</div>
<svg style="left:93.0px;top:743.0px" width="15" height="15" viewBox="0 0 16 16"><rect x="1.500" y="1.500" width="13" height="13" fill="#fff" stroke="#000" stroke-width="1.200"/><rect x="2" y="2" width="12" height="2.500" fill="#1414a0"/><path d="M4 7h7M4 9.500h5M4 12h6" stroke="#222"/></svg>
<div class="u" style="left:116.5px;top:741.6px;height:20px;line-height:20px;">输出</div>
<svg style="left:158.5px;top:746.0px" width="14" height="15" viewBox="0 0 16 16"><path d="M3 1v14M8 1v14M13 1v14" stroke="#000" stroke-width="1.300"/><path d="M0 5.500h16" stroke="#000" stroke-dasharray="2 1" stroke-width="1.200"/><path d="M0 10.500h16" stroke="#2828d0" stroke-dasharray="2 1" stroke-width="1.200"/></svg>
<div class="u" style="left:182px;top:743.8px;height:20px;line-height:20px;">调用表</div>
<svg style="left:236.0px;top:744.0px" width="18" height="18" viewBox="0 0 16 16"><circle cx="6.500" cy="6.500" r="5" fill="#fff" stroke="#000" stroke-width="1.300"/><path d="M10.500 10.500l5 5" stroke="#000" stroke-width="2.200"/></svg>
<div class="u" style="left:261.5px;top:743.8px;height:20px;line-height:20px;">监视表</div>
<svg style="left:314.0px;top:744.5px" width="21" height="18" viewBox="0 0 16 16"><g stroke="#000" stroke-width="1.100"><path d="M1 7l3.500-4 3.500 4-3.500 4z" fill="#f4ec20"/><path d="M8 7l3.500-4 3.500 4-3.500 4z" fill="#fff"/></g><path d="M1 7l3.500 4 2-2zM8 7l3.500 4 2-2z" fill="#000"/></svg>
<div class="u" style="left:340px;top:743.8px;height:20px;line-height:20px;">变量表</div>
<svg style="left:394.5px;top:745.0px" width="18" height="17" viewBox="0 0 17 16"><rect x="1.500" y="2" width="11" height="11" fill="#fff" stroke="#000" stroke-width="1.400"/><path d="M2 4.500h2.500M2 6.500h2.500M2 8.500h2.500M2 10.500h2.500" stroke="#000"/><circle cx="8.500" cy="7.500" r="3.300" fill="#f4f0f4" stroke="#333"/><path d="M11.500 10.500l4.500 4.500" stroke="#000" stroke-width="2"/></svg>
<div class="u" style="left:419.5px;top:743.8px;height:20px;line-height:20px;">搜寻1</div>
<svg style="left:466.5px;top:745.0px" width="18" height="17" viewBox="0 0 17 16"><rect x="1.500" y="2" width="11" height="11" fill="#fff" stroke="#000" stroke-width="1.400"/><path d="M2 4.500h2.500M2 6.500h2.500M2 8.500h2.500M2 10.500h2.500" stroke="#000"/><circle cx="8.500" cy="7.500" r="3.300" fill="#f4f0f4" stroke="#333"/><path d="M11.500 10.500l4.500 4.500" stroke="#000" stroke-width="2"/></svg>
<div class="u" style="left:492px;top:743.8px;height:20px;line-height:20px;">搜寻2</div>
<svg style="left:540.5px;top:746.0px" width="16" height="16" viewBox="0 0 16 16"><rect x="2.500" y="1.500" width="11" height="13" rx="1.500" fill="#fff" stroke="#000" stroke-width="1.300"/><path d="M5 5h6M5 7.500h6M5 10h4" stroke="#222"/></svg>
<div class="u" style="left:564px;top:743.8px;height:20px;line-height:20px;">剪辑历史</div>
<div style="left:22px;top:769.7px;width:1625px;height:135px;background:#292d3a;border-left:1px solid #fdfbfd;border-top:1px solid #8a868a;box-shadow:inset 1px 1px 0 #4a464a"></div>
<div class="o" style="left:25.5px;top:787.1px;height:14px;line-height:14px;"><b style="text-align:center;transform:scale(1.15)">★</b><i style="margin-right:-1.95px"> </i>黑月重编译程序已开启<i style="margin-right:-5.85px">!  </i><b style="text-align:right">（</b>可以在菜单中选择<b style="text-align:right">“</b>工具<i style="margin-right:-3.90px">-&gt;</i>黑月工具<b style="text-align:left">”</b>修改设置<b style="text-align:left">。</b>黑月版本<b style="text-align:left">：</b><i style="margin-right:-13.65px">3.7.7.4</i><b style="text-align:left">；</b>作者<b style="text-align:left">：</b>云外归鸟<b style="text-align:left">；</b>升级<b style="text-align:left">：</b>邓学彬<i style="margin-right:-1.95px"> </i>优化<b style="text-align:left">：</b>被封七号<b style="text-align:left">。</b><b style="text-align:left">）</b><b style="text-align:center;transform:scale(1)">◆</b><i style="margin-right:-1.95px">.</i>易语言助手提醒您<b style="text-align:left">：</b></div>
<div class="o" style="left:25.5px;top:800.7px;height:14px;line-height:14px;"><b style="text-align:center;transform:scale(1.45)">▼</b><b style="text-align:center;transform:scale(1.45)">▼</b><b style="text-align:center;transform:scale(1.45)">▼</b><b style="text-align:center;transform:scale(1.45)">▼</b><b style="text-align:center;transform:scale(1.45)">▼</b>助手正在加载中<b style="text-align:left">，</b>请看到加载插件完毕后在执行其他操作<b style="text-align:center;transform:scale(1.45)">▼</b><b style="text-align:center;transform:scale(1.45)">▼</b><b style="text-align:center;transform:scale(1.45)">▼</b><b style="text-align:center;transform:scale(1.45)">▼</b><b style="text-align:center;transform:scale(1.45)">▼</b></div>
<div class="o" style="left:25.5px;top:814.3000000000001px;height:14px;line-height:14px;"><b style="text-align:center;transform:scale(1)">◆</b><i style="margin-right:-1.95px">.</i>易语言助手提醒您<b style="text-align:left">：</b>正在初始化插件系统<i style="margin-right:-5.85px">...</i></div>
<div class="o" style="left:25.5px;top:827.9px;height:14px;line-height:14px;"><b style="text-align:center;transform:scale(1)">◆</b><i style="margin-right:-1.95px">.</i>易语言助手提醒您<b style="text-align:left">：</b>正在加载插件<i style="margin-right:-5.85px">...</i></div>
<div class="o" style="left:25.5px;top:841.5px;height:14px;line-height:14px;"><b style="text-align:center;transform:scale(1)">◆</b><i style="margin-right:-1.95px">.</i>易语言助手提醒您<b style="text-align:left">：</b>启用<b style="text-align:center;transform:scale(1)">☆</b>官方插件<i style="margin-right:-5.85px"> [ </i>模块守护<i style="margin-right:-21.45px"> 1.2.5 ] - </i>精易科技</div>
<div class="o" style="left:25.5px;top:855.1px;height:14px;line-height:14px;"><b style="text-align:center;transform:scale(1)">◆</b><i style="margin-right:-1.95px">.</i>易语言助手提醒您<b style="text-align:left">：</b>易语言助手加载完毕<b style="text-align:left">，</b>各个功能随心配置<b style="text-align:left">，</b>插件请按需开启<i style="margin-right:-1.95px">!</i></div>
<div class="o" style="left:25.5px;top:868.7px;height:14px;line-height:14px;">您正在使用<b style="text-align:right">【</b>易语言助手<b style="text-align:left">】</b><i style="margin-right:-25.35px"> -&gt;  3.2.701 </i>正式版</div>
<div class="o" style="left:25.5px;top:882.3000000000001px;height:14px;line-height:14px;"><b style="text-align:center;transform:scale(1)">◆</b><i style="margin-right:-1.95px">.</i>易语言助手提醒您<b style="text-align:left">：</b><b style="text-align:center;transform:scale(1.45)">▲</b><b style="text-align:center;transform:scale(1.45)">▲</b><b style="text-align:center;transform:scale(1.45)">▲</b><b style="text-align:center;transform:scale(1.45)">▲</b><b style="text-align:center;transform:scale(1.45)">▲</b><b style="text-align:center;transform:scale(1.45)">▲</b><b style="text-align:center;transform:scale(1.45)">▲</b><b style="text-align:center;transform:scale(1.45)">▲</b><b style="text-align:center;transform:scale(1.45)">▲</b><b style="text-align:center;transform:scale(1.45)">▲</b><b style="text-align:center;transform:scale(1.45)">▲</b><b style="text-align:right">【</b>加载完成<b style="text-align:left">】</b><b style="text-align:center;transform:scale(1.45)">▲</b><b style="text-align:center;transform:scale(1.45)">▲</b><b style="text-align:center;transform:scale(1.45)">▲</b><b style="text-align:center;transform:scale(1.45)">▲</b><b style="text-align:center;transform:scale(1.45)">▲</b><b style="text-align:center;transform:scale(1.45)">▲</b><b style="text-align:center;transform:scale(1.45)">▲</b><b style="text-align:center;transform:scale(1.45)">▲</b><b style="text-align:center;transform:scale(1.45)">▲</b><b style="text-align:center;transform:scale(1.45)">▲</b><b style="text-align:center;transform:scale(1.45)">▲</b></div>
<div style="left:1472px;top:836px;height:52px;line-height:52px;white-space:pre;font-family:'Liberation Sans','Noto Sans CJK SC',sans-serif;font-weight:900;font-size:35px;letter-spacing:1px;color:#3a9cf0;transform:skewX(-12deg) scaleX(1.130);transform-origin:0 50%">酒入论坛</div>
<div style="left:249.900px;top:26px;width:33.600px;height:33.600px;border-radius:50%;background:rgba(80,166,80,.72)"></div>
<svg style="left:266px;top:42px" width="16" height="24" viewBox="0 0 16 24"><path d="M1 1v17.500l4-3.800 3 7 2.800-1.200-3-6.800h5.700z" fill="#fff" stroke="#333" stroke-width=".800"/></svg>
</body></html>
